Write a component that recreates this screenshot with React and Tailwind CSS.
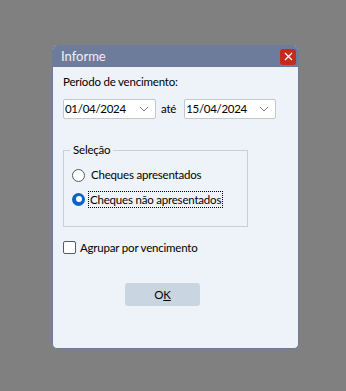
import React from "react";

const font = { fontFamily: 'Lato, "Noto Sans", sans-serif' };

const Chevron = () => (
  <svg width="10" height="6" viewBox="0 0 10 6" className="shrink-0">
    <polyline points="1,1 5,5 9,1" fill="none" stroke="#7a7f88" strokeWidth="1" />
  </svg>
);

const DateBox = ({ value, className }) => (
  <div
    className={`h-[20px] bg-white border border-[#c3c7cf] rounded-[2px] flex items-center justify-between pl-[1px] pr-[6px] ${className}`}
  >
    <span className="text-black leading-none tracking-[-0.3px]">{value}</span>
    <Chevron />
  </div>
);

const Radio = ({ checked }) =>
  checked ? (
    <div className="w-[13px] h-[13px] rounded-full bg-[#0a64c8] flex items-center justify-center shrink-0">
      <div className="w-[6px] h-[6px] rounded-full bg-white" />
    </div>
  ) : (
    <div className="w-[13px] h-[13px] rounded-full bg-white border border-[#555a63] shrink-0" />
  );

export default function App() {
  return (
    <div className="w-[346px] h-[391px] bg-[#808080] pt-[45px] pl-[52px]" style={font}>
      <div className="w-[247px] h-[304px] rounded-[5px] bg-[#eef3fa] border border-[#6d7c9b] overflow-hidden flex flex-col">
        {/* Title bar */}
        <div className="h-[21px] bg-[#6d7c9b] flex items-center justify-between pl-[8px] pr-[2px] shrink-0">
          <span className="text-[13px] text-[#eef1f7] leading-none">Informe</span>
          <div className="w-[16px] h-[16px] rounded-[3px] bg-[#c42b1c] flex items-center justify-center">
            <svg width="9" height="9" viewBox="0 0 9 9">
              <path d="M1 1 L8 8 M8 1 L1 8" stroke="white" strokeWidth="1.2" />
            </svg>
          </div>
        </div>

        {/* Body */}
        <div className="flex flex-col pl-[10px] pt-[7px] text-[11.5px] tracking-[-0.2px] text-black">
          <div className="h-[16px] leading-[16px]">Período de vencimento:</div>

          <div className="flex items-center mt-[9px]">
            <DateBox value="01/04/2024" className="w-[93px]" />
            <span className="ml-[5px] mr-[8px] leading-none">até</span>
            <DateBox value="15/04/2024" className="w-[92px]" />
          </div>

          <fieldset className="mt-[23px] w-[185px] h-[85px] border border-[#c6cfdc] pl-[8px]">
            <legend className="ml-[-2px] px-[3px] leading-[16px]">Seleção</legend>
            <div className="flex items-center gap-[5px] mt-[8px] h-[18px]">
              <Radio />
              <span className="leading-none px-[1px]">Cheques apresentados</span>
            </div>
            <div className="flex items-center gap-[3px] mt-[6px] h-[18px]">
              <Radio checked />
              <span className="leading-[15px] px-[1px] border border-dotted border-black">
                Cheques não apresentados
              </span>
            </div>
          </fieldset>

          <div className="flex items-center gap-[4px] mt-[14px] h-[13px]">
            <div className="w-[13px] h-[13px] bg-white border border-[#555a63] rounded-[2px] shrink-0" />
            <span className="leading-none">Agrupar por vencimento</span>
          </div>

          <div className="flex justify-start pl-[62px] mt-[29px]">
            <div className="w-[75px] h-[23px] rounded-[3px] bg-[#c9d5e1] flex items-center justify-center">
              <span className="leading-none">
                O<span className="underline">K</span>
              </span>
            </div>
          </div>
        </div>
      </div>
    </div>
  );
}
